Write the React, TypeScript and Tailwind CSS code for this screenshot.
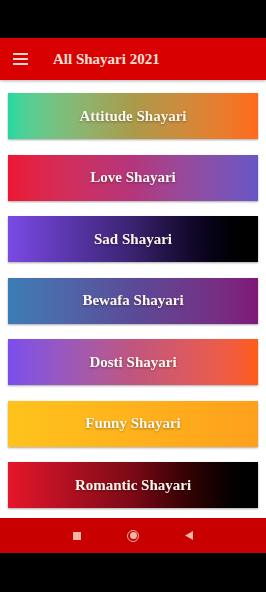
import React from "react";

const cards = [
  { title: "Attitude Shayari", bg: "bg-gradient-to-r from-[#1ed9a0] via-[#a99a4a] to-[#ff6a1a]" },
  { title: "Love Shayari", bg: "bg-gradient-to-r from-[#ec1632] via-[#b4357c] to-[#6756c6]" },
  { title: "Sad Shayari", bg: "bg-gradient-to-r from-[#7a4ae6] via-[#3a2370] to-[#000000]" },
  { title: "Bewafa Shayari", bg: "bg-gradient-to-r from-[#3a7db6] via-[#5a4a98] to-[#7f1878]" },
  { title: "Dosti Shayari", bg: "bg-gradient-to-r from-[#7b4ded] via-[#c0557e] to-[#ff5c14]" },
  { title: "Funny Shayari", bg: "bg-gradient-to-r from-[#ffc31c] to-[#ffa01c]" },
  { title: "Romantic Shayari", bg: "bg-gradient-to-r from-[#e6162b] via-[#7a0a16] to-[#000000]" },
];

export default function App() {
  return (
    <div className="w-[266px] h-[592px] bg-white flex flex-col overflow-hidden" style={{ fontFamily: '"Liberation Serif", "DejaVu Serif", serif' }}>
      <div className="h-[38px] bg-black shrink-0" />
      <div className="h-[42px] bg-[#d80000] flex items-center shrink-0 shadow-[0_1px_3px_rgba(0,0,0,0.3)]">
        <div className="ml-[13px] flex flex-col gap-[3px] w-[15px]">
          <span className="h-[2px] bg-[#ffd6d0] block" />
          <span className="h-[2px] bg-[#ffd6d0] block" />
          <span className="h-[2px] bg-[#ffd6d0] block" />
        </div>
        <span className="ml-[25px] text-[15px] font-bold text-[#ffe0d8]">All Shayari 2021</span>
      </div>

      <div className="flex-1 flex flex-col gap-[15.5px] px-[8px] pt-[13px]">
        {cards.map((c) => (
          <div
            key={c.title}
            className={`${c.bg} h-[46px] shrink-0 flex items-center justify-center shadow-[0_1px_2px_rgba(0,0,0,0.35)]`}
          >
            <span className="text-[#fff8ee] text-[15px] font-bold drop-shadow-[0_1px_1px_rgba(0,0,0,0.35)]">
              {c.title}
            </span>
          </div>
        ))}
      </div>

      <div className="h-[35px] bg-[#c80000] flex items-center justify-center gap-[46px] shrink-0">
        <span className="w-[8px] h-[8px] bg-[#f2b4a8] block" />
        <span className="w-[12px] h-[12px] rounded-full border-[1.5px] border-[#f2b4a8] flex items-center justify-center">
          <span className="w-[7px] h-[7px] rounded-full bg-[#f2b4a8] block" />
        </span>
        <svg width="8" height="9" viewBox="0 0 8 9">
          <path d="M8 0 L8 9 L0 4.5 Z" fill="#f2b4a8" />
        </svg>
      </div>
      <div className="h-[39px] bg-black shrink-0" />
    </div>
  );
}
